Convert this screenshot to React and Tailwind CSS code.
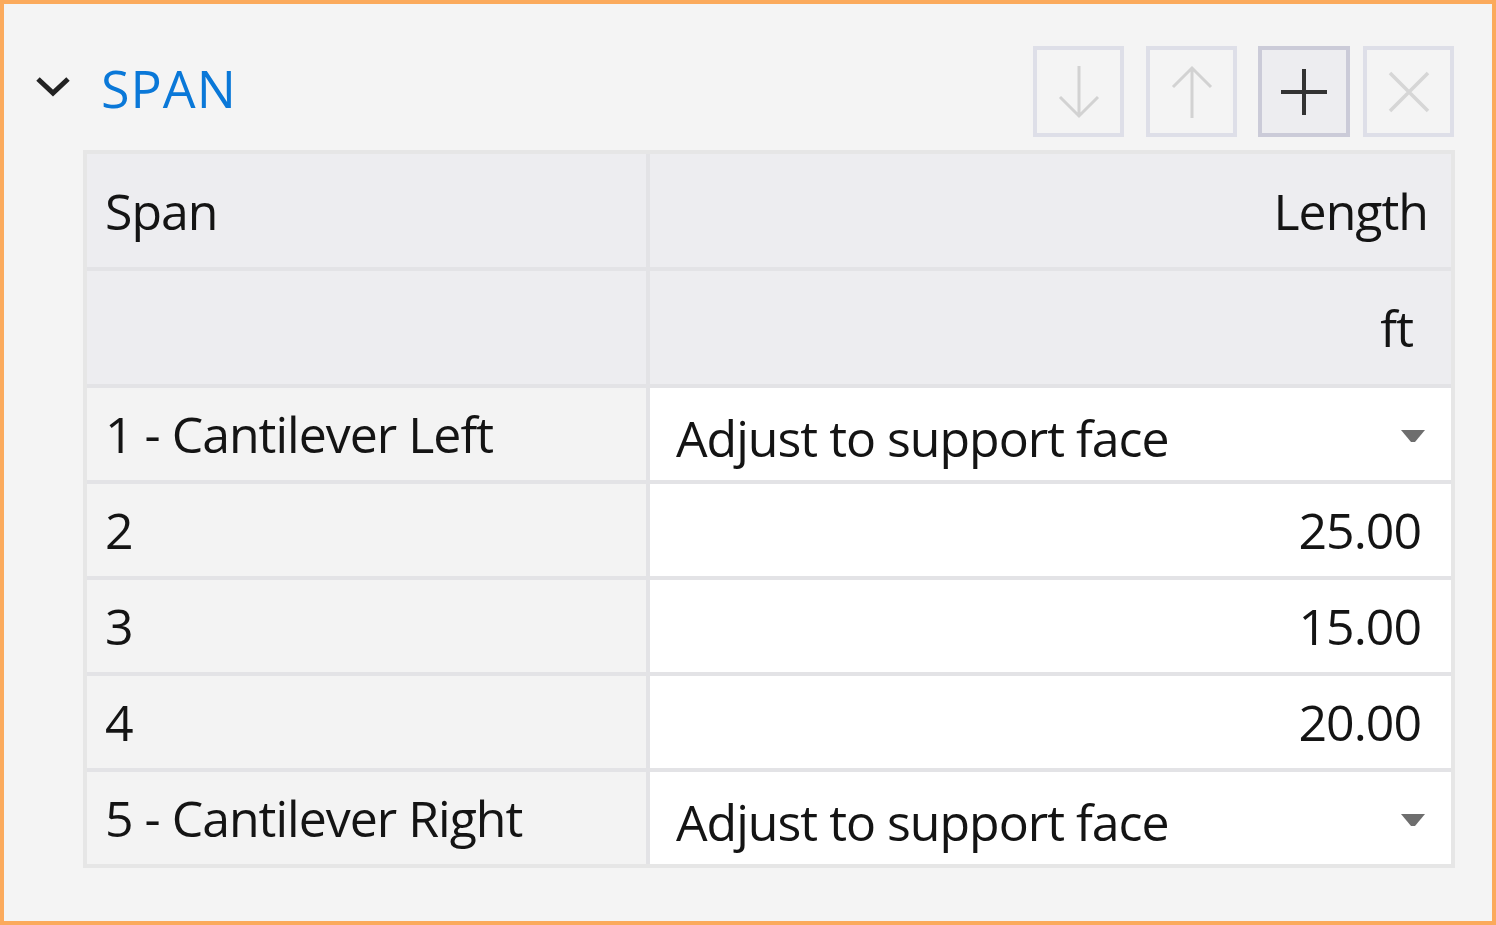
import React from "react";

const font = { fontFamily: '"Open Sans", "Noto Sans", sans-serif' };

const rows = [
  { label: "1 - Cantilever Left", value: "Adjust to support face", select: true },
  { label: "2", value: "25.00" },
  { label: "3", value: "15.00" },
  { label: "4", value: "20.00" },
  { label: "5 - Cantilever Right", value: "Adjust to support face", select: true },
];

function ToolButton({ active, children }) {
  return (
    <button
      className={
        active
          ? "flex h-[91px] w-[92px] items-center justify-center border-4 border-[#cbcbd8] bg-[#ededf0]"
          : "flex h-[91px] w-[91px] items-center justify-center border-4 border-[#dedfe8] bg-[#f4f4f4]"
      }
    >
      {children}
    </button>
  );
}

function Caret() {
  return (
    <svg width="24" height="14" viewBox="0 0 24 14" className="mt-[6px] shrink-0">
      <path d="M0 0 H24 L14 12 H10 Z" fill="#6e6e6e" />
    </svg>
  );
}

export default function App() {
  return (
    <div
      className="h-[925px] w-[1496px] border-4 border-[#fbaa5c] bg-[#f4f4f4] text-[#141414]"
      style={font}
    >
      <div className="mt-[42px] flex h-[91px] items-center pl-[31px] pr-[38px]">
        <svg width="36" height="24" viewBox="0 0 36 24" className="mb-[12px]">
          <path d="M3 5 L18 19 L33 5" fill="none" stroke="#222" strokeWidth="5" />
        </svg>
        <span className="mb-[8px] ml-[30px] text-[52px] leading-none tracking-[1px] text-[#0a78d8]">SPAN</span>
        <div className="ml-auto flex items-center">
          <ToolButton>
            <svg width="50" height="60" viewBox="0 0 50 60">
              <path d="M25 4 V54 M6 35 L25 54 L44 35" fill="none" stroke="#d2d2d2" strokeWidth="3" />
            </svg>
          </ToolButton>
          <div className="ml-[22px]">
            <ToolButton>
              <svg width="50" height="60" viewBox="0 0 50 60">
                <path d="M25 56 V6 M6 25 L25 6 L44 25" fill="none" stroke="#d2d2d2" strokeWidth="3" />
              </svg>
            </ToolButton>
          </div>
          <div className="ml-[21px]">
            <ToolButton active>
              <svg width="46" height="46" viewBox="0 0 46 46">
                <path d="M23 0 V46 M0 23 H46" fill="none" stroke="#333" strokeWidth="4" />
              </svg>
            </ToolButton>
          </div>
          <div className="ml-[13px]">
            <ToolButton>
              <svg width="42" height="42" viewBox="0 0 42 42">
                <path d="M2 2 L40 40 M40 2 L2 40" fill="none" stroke="#d6d6d6" strokeWidth="3.5" />
              </svg>
            </ToolButton>
          </div>
        </div>
      </div>

      <div className="ml-[79px] mt-[13px] grid w-[1372px] grid-cols-[559px_801px] gap-[4px] border-4 border-[#e6e6e6] bg-[#e3e3e6] text-[50px] leading-none tracking-[-1px]">
        <div className="flex h-[113px] items-center bg-[#ededf0] pl-[18px]">Span</div>
        <div className="flex h-[113px] items-center justify-end bg-[#ededf0] pr-[23px]">Length</div>
        <div className="h-[113px] bg-[#ededf0]" />
        <div className="flex h-[113px] items-center justify-end bg-[#ededf0] pr-[38px]">ft</div>
        {rows.map((r) => (
          <React.Fragment key={r.label}>
            <div className="flex h-[92px] items-center bg-[#f3f3f3] pl-[18px]">{r.label}</div>
            {r.select ? (
              <div className="flex h-[92px] items-center justify-between bg-white pl-[26px] pr-[26px]">
                <span className="mt-[8px]">{r.value}</span>
                <Caret />
              </div>
            ) : (
              <div className="flex h-[92px] items-center justify-end bg-white pr-[30px]">{r.value}</div>
            )}
          </React.Fragment>
        ))}
      </div>
    </div>
  );
}
